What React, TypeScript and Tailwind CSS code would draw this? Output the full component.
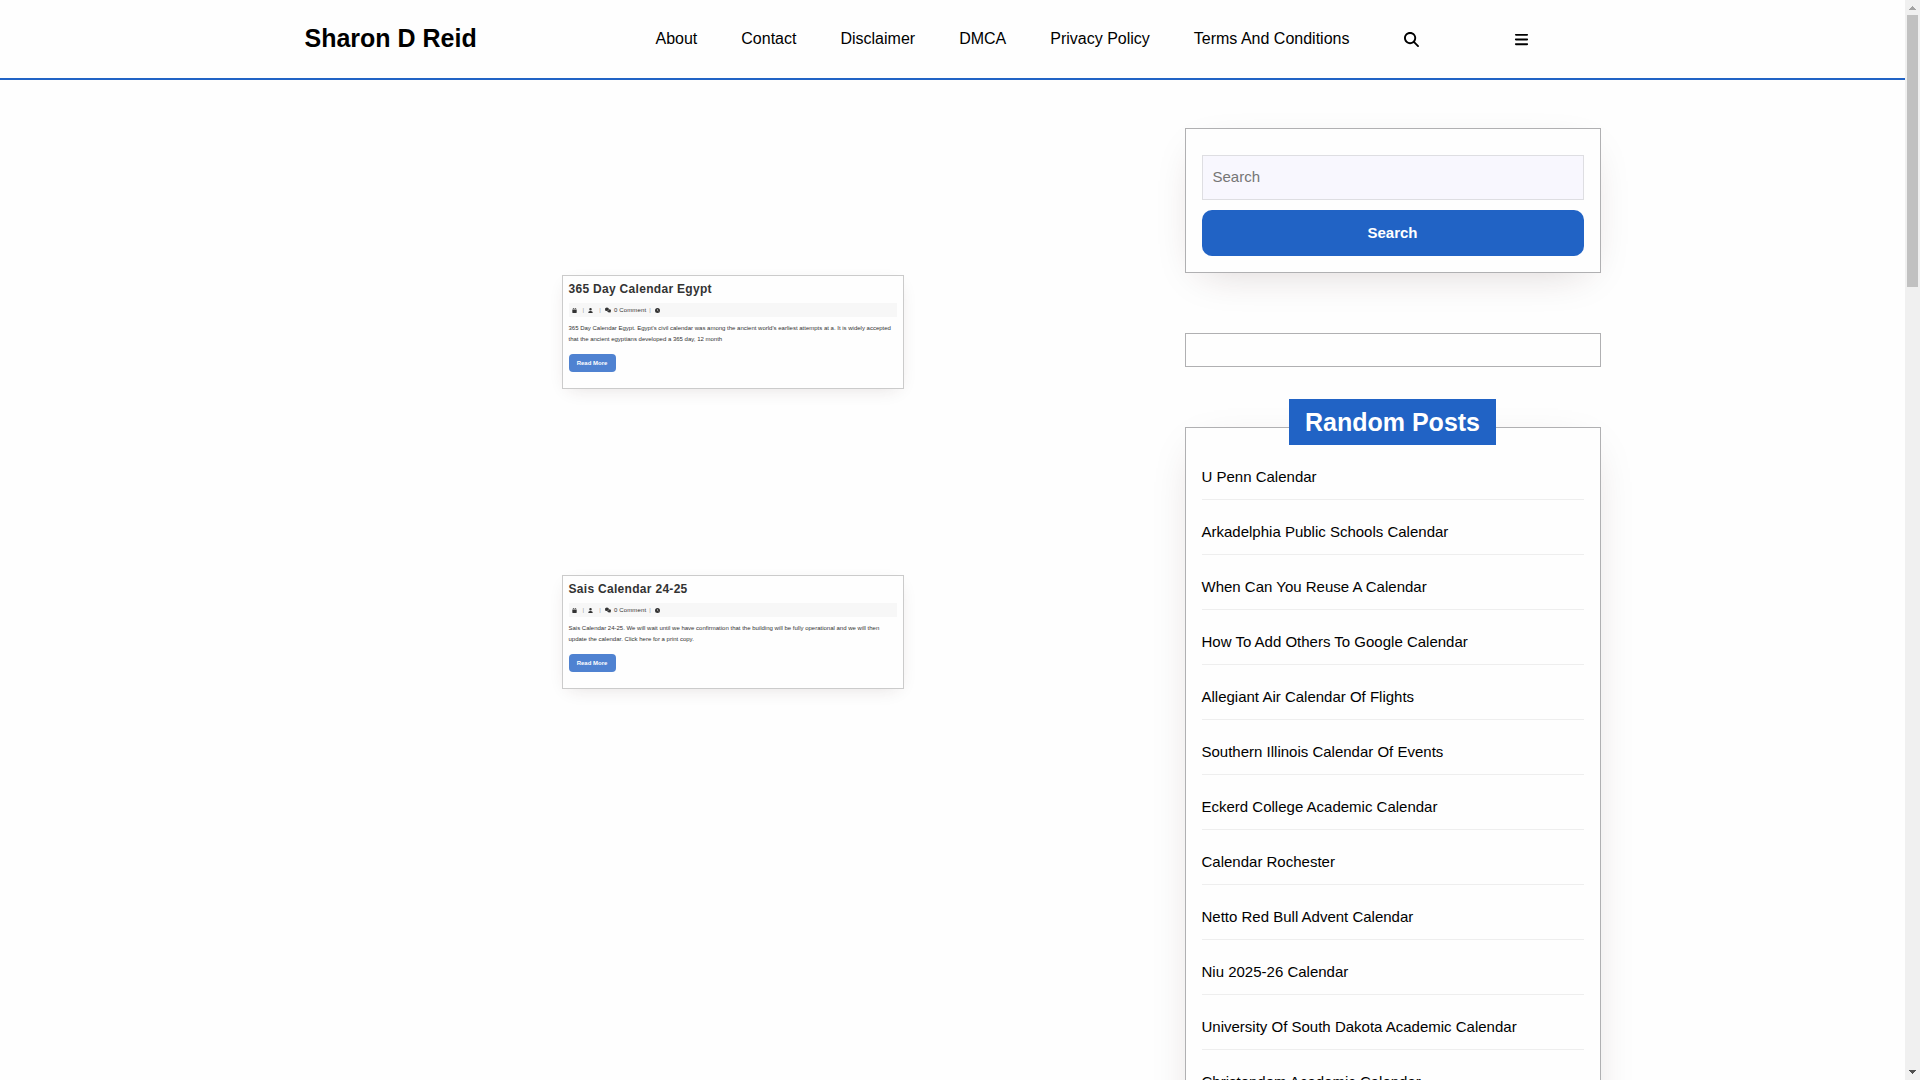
import React from "react";
import { FaBars, FaCalendar, FaClock, FaComments, FaMagnifyingGlass, FaUser } from "react-icons/fa6";

const navLinks = ["About", "Contact", "Disclaimer", "DMCA", "Privacy Policy", "Terms And Conditions"];

const posts = [
  {
    title: "365 Day Calendar Egypt",
    excerpt:
      "365 Day Calendar Egypt. Egypt's civil calendar was among the ancient world's earliest attempts at a. It is widely accepted that the ancient egyptians developed a 365 day, 12 month",
  },
  {
    title: "Sais Calendar 24-25",
    excerpt:
      "Sais Calendar 24-25. We will wait until we have confirmation that the building will be fully operational and we will then update the calendar. Click here for a print copy.",
  },
];

const randomPosts = [
  "U Penn Calendar",
  "Arkadelphia Public Schools Calendar",
  "When Can You Reuse A Calendar",
  "How To Add Others To Google Calendar",
  "Allegiant Air Calendar Of Flights",
  "Southern Illinois Calendar Of Events",
  "Eckerd College Academic Calendar",
  "Calendar Rochester",
  "Netto Red Bull Advent Calendar",
  "Niu 2025-26 Calendar",
  "University Of South Dakota Academic Calendar",
  "Christendom Academic Calendar",
];

function Header() {
  return (
    <header className="border-b-2 border-[#2163c5]">
      <div className="mx-auto flex h-[78px] max-w-[1320px] items-center">
        <div className="w-[341px] shrink-0 pl-3">
          <a href="#" className="text-[25px] font-bold">Sharon D Reid</a>
        </div>
        <nav className="flex shrink-0">
          {navLinks.map((label) => (
            <a key={label} href="#" className="px-[22px] text-base whitespace-nowrap">{label}</a>
          ))}
        </nav>
        <div className="flex w-20 shrink-0 justify-center">
          <button type="button" aria-label="Open search"><FaMagnifyingGlass className="size-[15px]" /></button>
        </div>
        <div className="flex w-[140px] shrink-0 justify-center">
          <button type="button" aria-label="Open menu"><FaBars className="size-[15px]" /></button>
        </div>
      </div>
    </header>
  );
}

function PostCard({ title, excerpt }: { title: string; excerpt: string }) {
  return (
    <article className="w-[342px] border border-[#cbcbcb] px-1.5 pt-[5px] pb-4 text-[#333] shadow-[0_5px_18px_-7px_rgba(60,30,30,0.16)]">
      <h2 className="text-xs leading-4 font-bold tracking-wide">{title}</h2>
      <div className="mt-1.5 flex h-[14px] items-center bg-[#f7f7f7] px-[3px] text-[6px] tracking-wide">
        <FaCalendar className="size-[5px]" />
        <span className="ml-1.5 text-[#999]">|</span>
        <FaUser className="ml-1 size-[5px]" />
        <span className="ml-1.5 text-[#999]">|</span>
        <FaComments className="ml-1 size-1.5" />
        <span className="ml-[3px]">0 Comment</span>
        <span className="ml-[3px] text-[#999]">|</span>
        <FaClock className="ml-1 size-[5px]" />
      </div>
      <p className="mt-1.5 text-[6px] leading-[11px]">{excerpt}</p>
      <a href="#" className="mt-[9px] flex h-[18px] w-[47px] items-center justify-center rounded bg-[#4f82d1] text-[6px] font-bold text-white">
        Read More
      </a>
    </article>
  );
}

const widget = "border border-[#b0b0b2] px-4 shadow-[0_12px_44px_-17px_rgba(60,25,25,0.22)]";

function Sidebar() {
  return (
    <aside className="w-1/3 px-3 pt-12 text-[15px]">
      <form className={widget + " pt-[26px] pb-4"} onSubmit={(e) => e.preventDefault()}>
        <input
          type="search"
          aria-label="Search"
          placeholder="Search"
          className="block h-[45px] w-full border border-[#dedee2] bg-[#f8f7fe] px-2.5 pb-0.5 placeholder:text-[#757575]"
        />
        <button type="submit" className="mt-2.5 block h-[46px] w-full rounded-[10px] bg-[#2163c5] font-bold text-white">
          Search
        </button>
      </form>
      <section className={widget + " mt-[60px] h-[34px]"} />
      <section className={widget + " mt-[60px] pb-4"}>
        <h2 className="mx-auto -mt-[29px] w-fit bg-[#2163c5] px-4 text-[25px] leading-[46px] font-bold text-white">Random Posts</h2>
        <ul className="mt-5">
          {randomPosts.map((title) => (
            <li key={title} className="mb-5 border-b border-[#eeeeee] pb-[11px] leading-[23px]">
              <a href="#">{title}</a>
            </li>
          ))}
        </ul>
      </section>
    </aside>
  );
}

function ScrollTrack() {
  return (
    <div className="flex w-[15px] shrink-0 flex-col items-center bg-[#f0f0f0]" aria-hidden="true">
      <svg className="h-[15px] w-[15px]" viewBox="0 0 15 15" shapeRendering="crispEdges">
        <path d="M4 10h7L7.5 6z" fill="#a3a3a3" />
      </svg>
      <div className="h-[272px] w-[11px] bg-[#c1c1c1]" />
      <svg className="mt-auto h-[15px] w-[15px]" viewBox="0 0 15 15" shapeRendering="crispEdges">
        <path d="M4 5h7L7.5 9z" fill="#505050" />
      </svg>
    </div>
  );
}

export default function App() {
  return (
    <div className="flex h-screen overflow-hidden bg-[#fefefe] font-['Liberation_Sans',Arial,sans-serif] text-black">
      <div className="min-w-0 flex-1 overflow-hidden">
        <Header />
        <div className="mx-auto flex max-w-[1320px]">
          <main className="flex w-2/3 flex-col items-center gap-[186px] px-3 pt-[195px]">
            {posts.map((post) => (
              <PostCard key={post.title} {...post} />
            ))}
          </main>
          <Sidebar />
        </div>
      </div>
      <ScrollTrack />
    </div>
  );
}
